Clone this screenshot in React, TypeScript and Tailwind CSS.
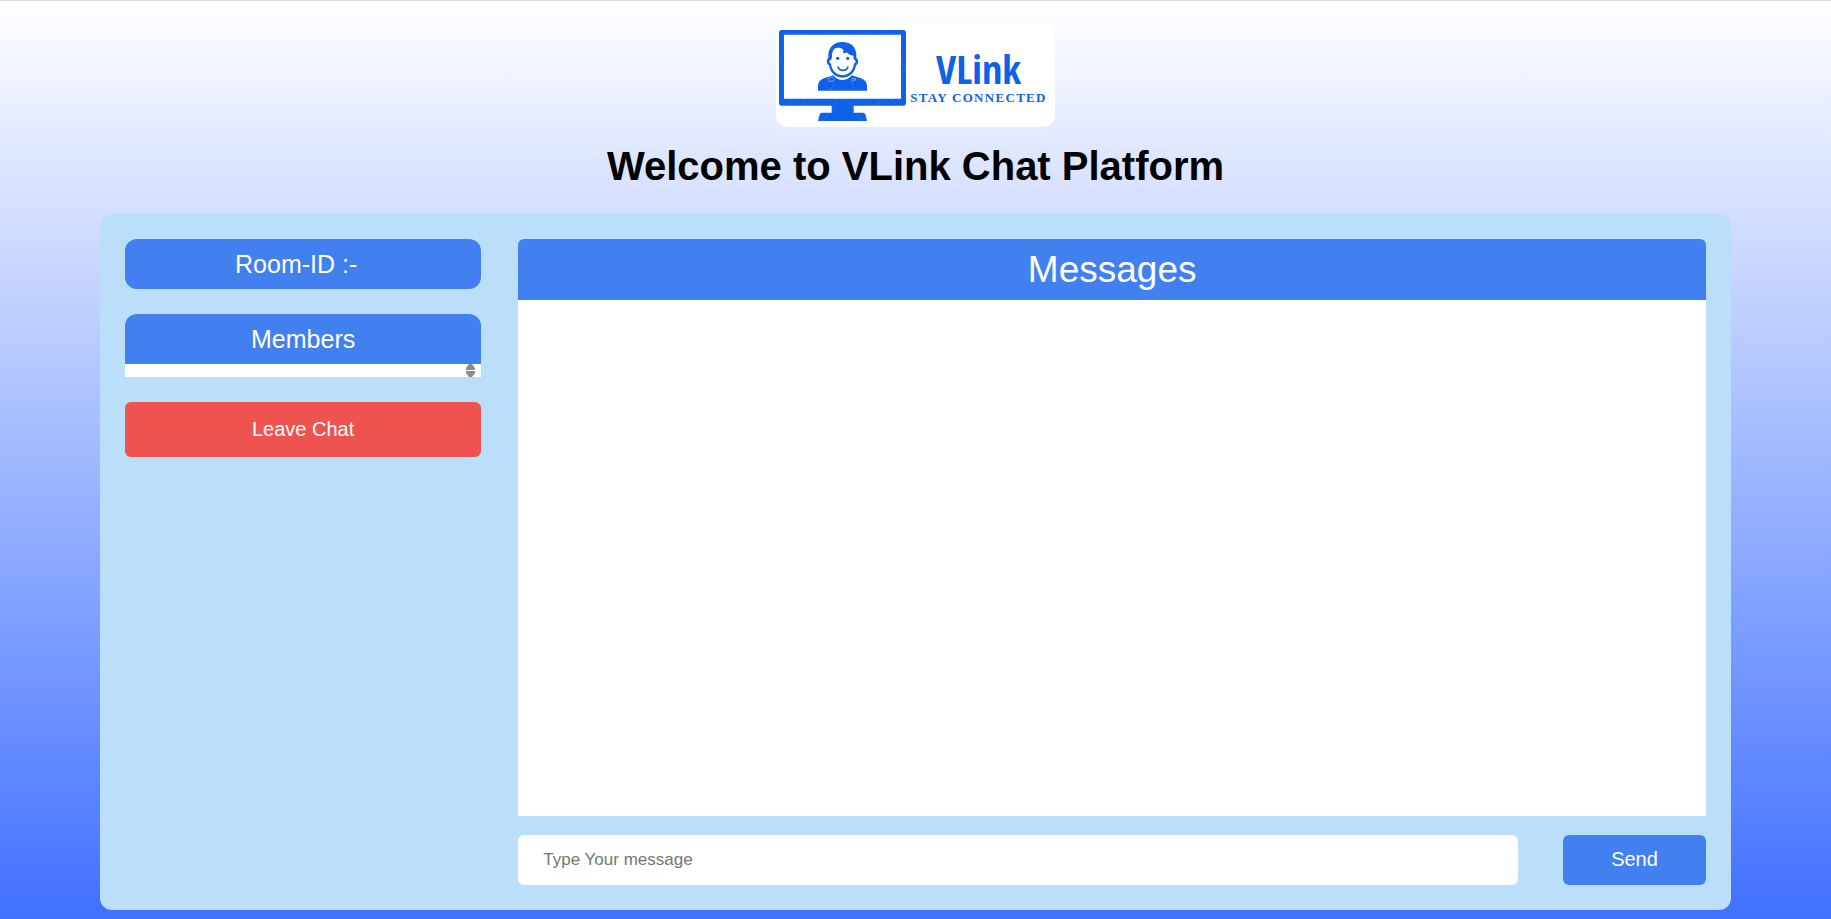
import { useState } from "react";

function MonitorLogo() {
  return (
    <svg viewBox="42 42 381 279" className="h-[93px] w-[127px] shrink-0" aria-hidden="true">
      <path
        fill="#0f62e8"
        fillRule="evenodd"
        d="M50 45H415Q423 45 423 53V263Q423 272 415 272H266V293H294Q299 293 301 298L306 318H159L164 298Q166 293 171 293H200V272H50Q42 272 42 263V53Q42 45 50 45ZM57 59V251H408V59Z"
      />
      <path
        fill="#0f62e8"
        d="M159 227V213C159 198 171 191 186 187L205 181C213 191 222 195 232 195C243 195 252 191 260 181L279 187C294 191 306 198 306 213V227Z"
      />
      <path
        fill="#0f62e8"
        fillRule="evenodd"
        d="M190 129C187 97 207 81 232 81C259 81 277 98 274 129C281 132 282 147 273 151C270 172 254 188 233 188C211 188 195 172 192 151C184 147 183 132 190 129ZM201 122C201 130 199 135 195 136C192 139 193 144 198 146C201 167 214 180 233 180C251 180 264 167 267 146C272 144 273 139 270 136C267 135 265 130 265 122C256 121 250 118 245 112C240 117 231 115 235 109C238 104 230 98 219 98C207 98 201 108 201 122Z"
      />
      <circle cx="218" cy="130" r="5" fill="#0f62e8" />
      <circle cx="248" cy="130" r="5" fill="#0f62e8" />
      <path d="M219 154C222 170 246 170 249 154" fill="none" stroke="#0f62e8" strokeWidth="5" />
      <g stroke="#ffffff" strokeOpacity="0.2" strokeWidth="1.5" fill="none">
        <path d="M95 45L110 59M355 45L370 59M82 251L62 272M108 251L128 272M222 251L174 318M242 251L292 318M350 251L335 272M378 251L396 272M42 130L57 150M408 140L423 160M196 227L210 200M268 227L258 200" />
        <path
          strokeOpacity="0.5"
          strokeWidth="2.5"
          d="M205 188C192 181 185 196 195 199C201 201 207 197 208 193M268 190C259 187 257 199 265 198L270 190L273 198"
        />
      </g>
    </svg>
  );
}

function Logo() {
  return (
    <div className="flex h-[103px] w-[279px] items-center rounded-xl bg-white pl-[3px]">
      <MonitorLogo />
      <div className="flex flex-1 flex-col items-center pt-1 pr-1 text-[#0f62e8]">
        <span className="font-['Open_Sans_Condensed','Roboto_Condensed',sans-serif] text-[40px] leading-10 font-bold">
          VLink
        </span>
        <span className="font-['Liberation_Serif',serif] text-[13px] leading-[18px] font-bold tracking-widest whitespace-nowrap">
          STAY CONNECTED
        </span>
      </div>
    </div>
  );
}

export default function App() {
  const [message, setMessage] = useState("");

  return (
    <div className="flex min-h-screen flex-col items-center border-t border-[#dcdce0] bg-[linear-gradient(to_bottom,#ffffff,#4070ff)] px-[100px] pt-[23px] pb-[9px] font-['Liberation_Sans',Arial,sans-serif]">
      <Logo />
      <h1 className="mt-4 text-[40px] leading-[46px] font-bold text-black">Welcome to VLink Chat Platform</h1>

      <main className="mt-[25px] grid w-full flex-1 grid-cols-[3fr_10fr] gap-[37px] rounded-xl bg-[#bbdefb] p-[25px]">
        <aside className="flex flex-col gap-[25px] text-center text-white">
          <h2 className="h-[50px] rounded-xl bg-[#4280ef] pr-[14px] text-[25px] leading-[50px]">Room-ID :-</h2>
          <section>
            <h2 className="h-[50px] rounded-t-xl bg-[#4280ef] text-[25px] leading-[50px]">Members</h2>
            <div className="flex h-[13px] justify-end bg-white pr-[6px]">
              <svg viewBox="0 0 9 13" className="h-[13px] w-[9px]" aria-hidden="true">
                <path d="M0 6V4L3 0H6L9 4V6ZM0 7H9V9L6 13H3L0 9Z" fill="#8b8b8b" />
              </svg>
            </div>
          </section>
          <button type="button" className="h-[55px] rounded-md bg-[#ef5350] pb-0.5 text-xl">
            Leave Chat
          </button>
        </aside>

        <section className="flex flex-col">
          <h2 className="h-[61px] rounded-t-md bg-[#4280ef] text-center text-[37px] leading-[61px] text-white">
            Messages
          </h2>
          <div className="min-h-80 flex-1 bg-white" role="log" />
          <form className="mt-[19px] flex gap-[45px]" onSubmit={(e) => e.preventDefault()}>
            <input
              type="text"
              aria-label="Type Your message"
              placeholder="Type Your message"
              value={message}
              onChange={(e) => setMessage(e.target.value)}
              className="h-[50px] min-w-0 flex-1 rounded-md bg-white px-[25px] text-[17px] text-black outline-none placeholder:text-[#757575]"
            />
            <button type="submit" className="h-[50px] w-[143px] rounded-md bg-[#4280ef] pb-0.5 text-xl text-white">
              Send
            </button>
          </form>
        </section>
      </main>
    </div>
  );
}
